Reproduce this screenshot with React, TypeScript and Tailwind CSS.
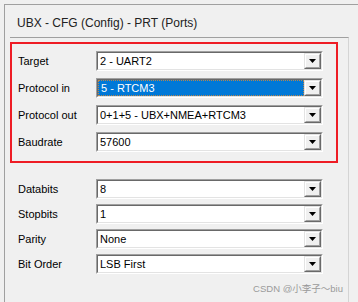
import React from "react";

const Arrow = () => (
  <div className="w-[17px] h-full flex border border-t-[#e3e3e3] border-l-[#e3e3e3] border-r-[#696969] border-b-[#696969]">
    <div className="flex-1 flex items-center justify-center bg-[#f0f0f0] border border-t-white border-l-white border-r-[#a0a0a0] border-b-[#a0a0a0]">
      <svg width="7" height="4" viewBox="0 0 7 4">
        <path d="M0 0H7L3.5 4Z" fill="#000" />
      </svg>
    </div>
  </div>
);

const Combo = ({ value, selected }: { value: string; selected?: boolean }) => (
  <div className="w-[227px] h-[20px] flex border border-t-[#a0a0a0] border-l-[#a0a0a0] border-r-white border-b-white">
    <div className="flex-1 flex bg-white border border-t-[#696969] border-l-[#696969] border-r-[#e3e3e3] border-b-[#e3e3e3]">
      {selected ? (
        <div className="flex-1 flex items-center pl-[2px] bg-[#0078d7] text-white border border-dotted border-[#b8864b]">
          {value}
        </div>
      ) : (
        <div className="flex-1 flex items-center pl-[2px]">{value}</div>
      )}
      <Arrow />
    </div>
  </div>
);

const Row = ({ label, value, selected }: { label: string; value: string; selected?: boolean }) => (
  <div className="flex items-center">
    <span className="w-[78px]">{label}</span>
    <Combo value={value} selected={selected} />
  </div>
);

export default function App() {
  return (
    <div className="w-[358px] h-[302px] bg-[#f0f0f0] overflow-hidden relative text-[11px] text-black font-['Liberation_Sans',Arial,sans-serif]">
      <div className="ml-[4px] mt-[4px] h-full border-t border-l border-[#a0a0a0]">
        <div className="h-[32px] flex items-center pt-[4px] pl-[12px] text-[12px] text-[#222]">
          UBX - CFG (Config) - PRT (Ports)
        </div>
        <div className="ml-[5px] mr-[9px] h-full border-t border-r border-t-[#a0a0a0] border-r-[#d4d4d4]">
          <div className="mt-[4px] w-[328px] border-2 border-[#ee1c25] pl-[6px] pt-[7px] pb-[9px] flex flex-col gap-[7px]">
            <Row label="Target" value="2 - UART2" />
            <Row label="Protocol in" value="5 - RTCM3" selected />
            <Row label="Protocol out" value="0+1+5 - UBX+NMEA+RTCM3" />
            <Row label="Baudrate" value="57600" />
          </div>
          <div className="mt-[16px] pl-[8px] flex flex-col gap-[5px]">
            <Row label="Databits" value="8" />
            <Row label="Stopbits" value="1" />
            <Row label="Parity" value="None" />
            <Row label="Bit Order" value="LSB First" />
          </div>
        </div>
      </div>
      <div className="absolute right-[15px] bottom-[6px] text-[9.5px] text-[#9a9a9a] font-['Liberation_Sans','Noto_Sans_CJK_SC',sans-serif]">
        CSDN @小李子～biu
      </div>
    </div>
  );
}
